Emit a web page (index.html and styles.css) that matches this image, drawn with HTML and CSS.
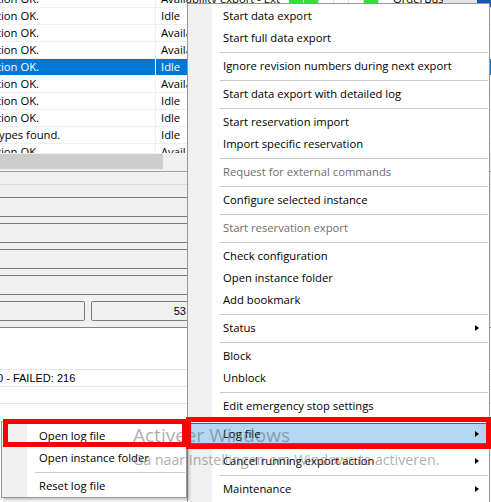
FILE: index.html
```html
<!DOCTYPE html>
<html>
<head>
<meta charset="utf-8">
<link rel="stylesheet" href="styles.css">
</head>
<body>
<div class="app">
  <div class="grid">
    <div class="row">
      <div class="c1"><span>tion OK.</span></div>
      <div class="c2">Availability export - Ext</div>
      <div class="cell green"></div><div class="cell green"></div><div class="cell"></div><div class="cell"></div><div class="cell"></div><div class="cell green"></div>
      <div class="txtcell">OrderBus II</div>
      <div class="greycell"></div>
      <div class="bluecell"></div>
    </div>
    <div class="row"><div class="c1"><span>tion OK.</span></div><div class="c2">Idle</div></div>
    <div class="row"><div class="c1"><span>tion OK.</span></div><div class="c2">Availability export</div></div>
    <div class="row"><div class="c1"><span>tion OK.</span></div><div class="c2">Availability export</div></div>
    <div class="row sel"><div class="c1"><span>tion OK.</span></div><div class="c2">Idle</div></div>
    <div class="row"><div class="c1"><span>tion OK.</span></div><div class="c2">Availability export</div></div>
    <div class="row"><div class="c1"><span>tion OK.</span></div><div class="c2">Idle</div></div>
    <div class="row"><div class="c1"><span>tion OK.</span></div><div class="c2">Idle</div></div>
    <div class="row"><div class="c1"><span class="t2">ypes found.</span></div><div class="c2">Idle</div></div>
    <div class="row"><div class="c1"><span>tion OK.</span></div><div class="c2">Availability export</div></div>
  </div>
  <div class="hscroll"><div class="thumb"></div></div>
  <div class="panel">
    <div class="band-a"></div>
    <div class="band-b"></div>
    <div class="box"></div>
    <div class="box"></div>
    <div class="box"></div>
    <div class="box"></div>
    <div class="pair">
      <div class="box half-l"></div>
      <div class="box half-r">53</div>
    </div>
  </div>
  <div class="log">
    <div class="log-top"></div>
    <div class="log-row"><span>0 - FAILED: 216</span></div>
    <div class="log-row"></div>
  </div>
</div>

<div class="menu main">
  <div class="mi">Start data export</div>
  <div class="mi">Start full data export</div>
  <div class="sep"></div>
  <div class="mi">Ignore revision numbers during next export</div>
  <div class="sep"></div>
  <div class="mi">Start data export with detailed log</div>
  <div class="sep"></div>
  <div class="mi">Start reservation import</div>
  <div class="mi">Import specific reservation</div>
  <div class="sep"></div>
  <div class="mi dis">Request for external commands</div>
  <div class="sep"></div>
  <div class="mi">Configure selected instance</div>
  <div class="sep"></div>
  <div class="mi dis">Start reservation export</div>
  <div class="sep"></div>
  <div class="mi">Check configuration</div>
  <div class="mi">Open instance folder</div>
  <div class="mi">Add bookmark</div>
  <div class="sep"></div>
  <div class="mi"><span>Status</span><span class="arrow"></span></div>
  <div class="sep"></div>
  <div class="mi">Block</div>
  <div class="mi">Unblock</div>
  <div class="sep"></div>
  <div class="mi">Edit emergency stop settings</div>
  <div class="sep"></div>
  <div class="mi hl"><span>Log file</span><span class="arrow"></span></div>
  <div class="sep"></div>
  <div class="mi"><span>Cancel running export action</span><span class="arrow"></span></div>
  <div class="sep"></div>
  <div class="mi"><span>Maintenance</span><span class="arrow"></span></div>
</div>

<div class="menu sub">
  <div class="smi">Open log file</div>
  <div class="smi">Open instance folder</div>
  <div class="ssep"></div>
  <div class="smi">Reset log file</div>
</div>

<div class="watermark">
  <div class="wm1">Activeer Windows</div>
  <div class="wm2">Ga naar Instellingen om Windows te activeren.</div>
</div>

<div class="mark mark-main"></div>
<div class="mark mark-sub"></div>
</body>
</html>
```

FILE: styles.css
```css
* {
  box-sizing: border-box;
  margin: 0;
  padding: 0;
}

html,
body {
  width: 491px;
  height: 502px;
  overflow: hidden;
  background: #fff;
}

body {
  position: relative;
  font-family: "Open Sans", "Noto Sans", sans-serif;
  font-size: 11.25px;
  color: #000;
}

.app {
  width: 491px;
}

/* ---------- grid ---------- */
.grid {
  margin-top: -9px;
  height: 162px;
  overflow: hidden;
}

.row {
  display: flex;
  height: 17px;
  border-bottom: 1px solid #f0f0f0;
  line-height: 16px;
  white-space: nowrap;
}

.c1 {
  flex: none;
  width: 156px;
  border-right: 1px solid #f0f0f0;
  overflow: hidden;
}

.c1 span {
  display: inline-block;
  margin-left: -3px;
}

.c1 span.t2 {
  margin-left: -1px;
}

.c2 {
  flex: none;
  width: 133px;
  padding-left: 5px;
  overflow: hidden;
}

.row.sel {
  background: #0078d7;
  color: #fff;
}

.row.sel .c1 {
  border-right-color: #fff;
}

.cell {
  flex: none;
  width: 15px;
  border-right: 1px solid #e4e4e4;
}

.cell.green {
  background: #2fe22f;
}

.txtcell {
  flex: none;
  width: 64px;
  padding-left: 14px;
  overflow: hidden;
}

.greycell {
  flex: none;
  width: 34px;
  background: #e3e3e3;
}

.bluecell {
  flex: none;
  width: 14px;
  background: #1e56b4;
}

/* ---------- scrollbar ---------- */
.hscroll {
  height: 18px;
  background: #f0f0f0;
  padding-top: 1px;
}

.thumb {
  width: 163px;
  height: 15px;
  background: #cdcdcd;
}

/* ---------- panel ---------- */
.panel {
  background: #f0f0f0;
  border-top: 1px solid #a0a0a0;
  border-bottom: 1px solid #828282;
  padding-bottom: 6px;
}

.band-a {
  height: 13px;
  border-bottom: 1px solid #dcdcdc;
}

.band-b {
  height: 12px;
}

.box {
  height: 20px;
  width: 210px;
  margin-left: -10px;
  margin-bottom: 6px;
  border: 1px solid #7a7a7a;
  border-radius: 2px;
  background: #f0f0f0;
  font-family: "Liberation Sans", Arial, sans-serif;
  font-size: 11px;
  line-height: 18px;
}

.pair {
  display: flex;
}

.pair .box {
  margin-bottom: 0;
}

.half-l {
  width: 95px;
}

.box.half-r {
  width: 98px;
  margin-left: 6px;
  padding-right: 2px;
  text-align: right;
}

/* ---------- log ---------- */
.log {
  font-family: "Liberation Sans", Arial, sans-serif;
  font-size: 11px;
}

.log-top {
  height: 42px;
  border-bottom: 1px solid #e6e6e6;
}

.log-row {
  height: 17px;
  line-height: 16px;
  border-bottom: 1px solid #e6e6e6;
  white-space: nowrap;
}

.log-row span {
  display: inline-block;
  margin-left: -3px;
}

/* ---------- menus ---------- */
.menu {
  position: absolute;
  border: 1px solid #979797;
  white-space: nowrap;
}

.main {
  left: 187px;
  top: 3px;
  width: 303px;
  height: 520px;
  padding-top: 1px;
  background: linear-gradient(to right, #f0f0f0 0, #f0f0f0 24px, #fff 24px);
}

.mi {
  display: flex;
  justify-content: space-between;
  align-items: center;
  height: 22px;
  line-height: 22px;
  padding-left: 35px;
  padding-right: 10px;
}

.mi.dis {
  color: #6d6d6d;
}

.mi.hl {
  height: 21px;
  line-height: 19px;
  margin-bottom: 1px;
  padding-left: 34px;
  padding-right: 9px;
  background: #b3d7f3;
  border: 1px solid #0078d7;
}

.sep {
  margin: 3px 1px 2px 32px;
  border-top: 1px solid #cbcbcb;
}

.arrow {
  width: 0;
  height: 0;
  border-left: 4px solid #000;
  border-top: 3.5px solid transparent;
  border-bottom: 3.5px solid transparent;
}

.sub {
  left: 1px;
  top: 421px;
  width: 186px;
  padding-top: 3px;
  background: linear-gradient(to right, #f0f0f0 0, #f0f0f0 25px, #fff 25px);
  box-shadow: 2px 2px 3px rgba(0, 0, 0, 0.25);
}

.smi {
  height: 22px;
  line-height: 22px;
  padding-left: 37px;
}

.ssep {
  margin: 3px 1px 2px 33px;
  border-top: 1px solid #cbcbcb;
}

/* ---------- overlays ---------- */
.watermark {
  position: absolute;
  left: 133px;
  top: 426px;
  color: rgba(105, 105, 105, 0.55);
  white-space: nowrap;
  pointer-events: none;
}

.wm1 {
  font-size: 19px;
  line-height: 19px;
  margin-bottom: 8px;
}

.wm2 {
  font-size: 14.2px;
  line-height: 14px;
}

.mark {
  position: absolute;
  border: 5px solid #ff0000;
}

.mark-main {
  left: 186px;
  top: 417px;
  width: 305px;
  height: 32px;
}

.mark-sub {
  left: 3px;
  top: 419px;
  width: 184px;
  height: 28px;
}
```
